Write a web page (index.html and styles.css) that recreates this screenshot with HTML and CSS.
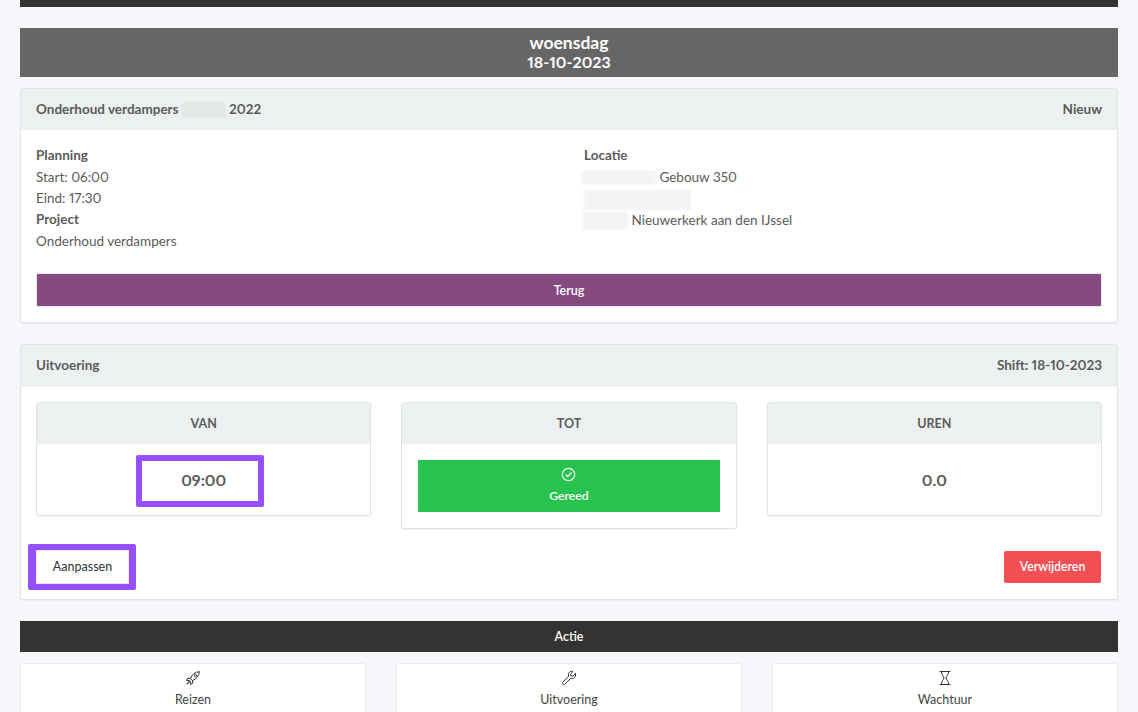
FILE: index.html
```html
<!DOCTYPE html>
<html lang="nl">
<head>
<meta charset="utf-8">
<title>Uitvoering</title>
<link rel="stylesheet" href="styles.css">
</head>
<body>
<div class="page">
  <div class="topbar"></div>
  <div class="dayhead"><div class="day">woensdag</div><div class="date">18-10-2023</div></div>

  <section class="card first">
    <header class="card-head">
      <span>Onderhoud verdampers <span class="blur blur-title"></span> 2022</span>
      <span>Nieuw</span>
    </header>
    <div class="card-body">
      <div class="info">
        <div>
          <div class="label">Planning</div>
          <div class="line">Start: 06:00</div>
          <div class="line">Eind: 17:30</div>
          <div class="label">Project</div>
          <div class="line">Onderhoud verdampers</div>
        </div>
        <div>
          <div class="label">Locatie</div>
          <div class="line"><span class="blur blur-a"></span> Gebouw 350</div>
          <div class="line"><span class="blur blur-b"></span></div>
          <div class="line"><span class="blur blur-c"></span> Nieuwerkerk aan den IJssel</div>
        </div>
      </div>
      <a class="btn-back">Terug</a>
    </div>
  </section>

  <section class="card second">
    <header class="card-head tall">
      <span>Uitvoering</span>
      <span>Shift: 18-10-2023</span>
    </header>
    <div class="card-body">
      <div class="times">
        <div class="box">
          <div class="box-head">VAN</div>
          <div class="box-value">09:00</div>
          <div class="mark mark-van"></div>
        </div>
        <div class="box">
          <div class="box-head">TOT</div>
          <div class="box-inner">
            <a class="btn-done">
              <svg class="icon-check" viewBox="0 0 16 16" fill="none" stroke="#fff" stroke-width="1.3" stroke-linecap="round" stroke-linejoin="round"><circle cx="8" cy="8" r="6.6"/><path d="M5.2 8.3l2 1.9 3.6-4"/></svg>
              <span>Gereed</span>
            </a>
          </div>
        </div>
        <div class="box">
          <div class="box-head">UREN</div>
          <div class="box-value">0.0</div>
        </div>
      </div>
      <div class="actions">
        <div class="mark-wrap"><a class="btn-edit">Aanpassen</a></div>
        <a class="btn-delete">Verwijderen</a>
      </div>
    </div>
  </section>

  <div class="actionbar">Actie</div>
  <div class="tiles">
    <a class="tile">
      <svg class="tile-icon" viewBox="0 0 16 16" fill="none" stroke="#333" stroke-width="1" stroke-linejoin="round" stroke-linecap="round"><path d="M5.6 8.2C7 4.4 10 2 14.4 1.6 14 6 11.6 9 7.8 10.4z"/><circle cx="10.4" cy="5.6" r="1.2"/><path d="M5.6 8.2L2.6 8.4 1.6 10.6 4.6 10.6"/><path d="M7.8 10.4L7.6 13.4 5.4 14.4 5.4 11.4"/><path d="M3.8 11.6L1.8 14.2 4.4 12.2"/></svg>
      <span>Reizen</span>
    </a>
    <a class="tile">
      <svg class="tile-icon" viewBox="0 0 16 16" fill="none" stroke="#333" stroke-width="1" stroke-linejoin="round" stroke-linecap="round"><path d="M14.4 3.8L11.9 6.2 9.9 5.9 9.6 3.9 12 1.5C10.2.9 8.3 1.6 7.6 3.3 7.2 4.3 7.3 5.4 7.7 6.2L1.9 12C1.2 12.7 1.2 13.7 1.8 14.3 2.4 14.9 3.4 14.8 4.1 14.1L9.7 8.3C10.6 8.7 11.7 8.7 12.6 8.3 14.4 7.5 15.1 5.6 14.4 3.8z"/></svg>
      <span>Uitvoering</span>
    </a>
    <a class="tile">
      <svg class="tile-icon" viewBox="0 0 16 16" fill="none" stroke="#333" stroke-width="1" stroke-linejoin="round" stroke-linecap="round"><path d="M3 1.5H13M3 14.5H13"/><path d="M4.3 1.5C4.3 5 7 6.5 7 8S4.3 11 4.3 14.5M11.7 1.5C11.7 5 9 6.5 9 8S11.7 11 11.7 14.5"/></svg>
      <span>Wachtuur</span>
    </a>
  </div>
</div>
</body>
</html>
```
FILE: styles.css
```css
* { box-sizing: border-box; }
html, body { margin: 0; height: 712px; overflow: hidden; }
body {
  background: #f5f7fb;
  color: #5b5b5b;
  font-family: Lato, "Noto Sans", sans-serif;
  font-size: 13.5px;
  font-variant-numeric: proportional-nums;
  line-height: 21px;
}
.page { padding: 0 20px; }
.topbar { height: 7px; background: #333; }
.dayhead {
  margin-top: 21px;
  height: 49px;
  padding-top: 6px;
  background: #666;
  color: #fff;
  font-weight: 700;
  text-align: center;
}
.day { font-size: 17.5px; line-height: 18px; }
.date { font-size: 16px; line-height: 19px; }
.card {
  background: #fff;
  border: 1px solid #e2e4e6;
  border-radius: 3px;
  box-shadow: 0 1px 1px rgba(0,0,0,.05);
}
.first { margin-top: 11px; height: 235px; }
.second { margin-top: 21px; height: 256px; }
.card-head {
  display: flex;
  justify-content: space-between;
  align-items: center;
  height: 41px;
  padding: 0 15px 1px;
  background: #ecf0f1;
  font-weight: 700;
}
.tall { height: 42px; padding-bottom: 1px; }
.card-body { padding: 15px; }
.info {
  display: grid;
  grid-template-columns: 1fr 1fr;
  column-gap: 30px;
  height: 128px;
}
.line { height: 21px; margin-top: 0.25px; }
.label { font-weight: 700; }
.label + .line { margin-top: 1px; }
.blur { display: inline-block; vertical-align: middle; filter: blur(1px); }
.blur-title { width: 44px; height: 16px; margin: -2px 0; background: #e3e6e7; }
.blur-a { width: 74px; height: 14px; margin: -2px 0 0 -2px; background: #f3f3f3; }
.blur-b { width: 107px; height: 20px; background: #f4f4f4; }
.blur-c { width: 45px; height: 17px; margin: -2px 0 0 -1px; background: #f3f3f3; }
.btn-back {
  display: block;
  height: 34px;
  border: 1px solid #e8e8e8;
  border-radius: 2px;
  background: #854b80;
  color: #fff;
  font-weight: 600;
  font-size: 12.5px;
  line-height: 33px;
  text-align: center;
}
.times {
  display: grid;
  grid-template-columns: repeat(3, 1fr);
  column-gap: 30px;
  align-items: start;
}
.box {
  position: relative;
  background: #fff;
  border: 1px solid #e0e2e4;
  border-radius: 3px;
  box-shadow: 0 1px 1px rgba(0,0,0,.05);
}
.box-head {
  height: 41px;
  background: #ecf0f1;
  font-size: 12.5px;
  font-weight: 700;
  line-height: 41px;
  text-align: center;
}
.box-value {
  height: 71px;
  font-size: 16px;
  font-weight: 700;
  line-height: 72px;
  text-align: center;
}
.mark {
  position: absolute;
  border: 6px solid #9650ff;
  border-radius: 2px;
}
.mark-van { left: 99px; top: 52px; width: 128px; height: 52px; }
.box-inner { padding: 16px; }
.btn-done {
  display: flex;
  flex-direction: column;
  align-items: center;
  height: 52px;
  padding-top: 7px;
  background: #28c34f;
  color: #fff;
  border-radius: 1px;
  font-weight: 600;
  font-size: 12.2px;
}
.icon-check { width: 15px; height: 15px; margin-bottom: 3px; }
.actions {
  display: flex;
  justify-content: space-between;
  align-items: center;
  margin-top: 15px;
  padding-right: 1px;
}
.mark-wrap {
  margin-left: -8px;
  padding: 6px 7px 6px 8px;
  background: #9650ff;
  border-radius: 2px;
}
.btn-edit {
  display: block;
  width: 93px;
  height: 34px;
  background: #fff;
  border: 1px solid #e8e8e8;
  color: #333;
  font-size: 12.5px;
  line-height: 31px;
  text-align: center;
}
.btn-delete {
  width: 97px;
  height: 32px;
  background: #f44f54;
  border-radius: 2px;
  color: #fff;
  font-weight: 600;
  font-size: 12.3px;
  line-height: 31px;
  text-align: center;
}
.actionbar {
  margin-top: 21px;
  height: 31px;
  background: #333;
  color: #fff;
  font-weight: 600;
  font-size: 12.5px;
  line-height: 31px;
  text-align: center;
}
.tiles {
  display: grid;
  grid-template-columns: repeat(3, 1fr);
  column-gap: 30px;
  margin-top: 11px;
}
.tile {
  display: flex;
  flex-direction: column;
  align-items: center;
  height: 70px;
  padding-top: 6px;
  background: #fff;
  border: 1px solid #e8eaee;
  border-radius: 3px;
  color: #444;
  font-size: 12.5px;
}
.tile-icon { width: 16px; height: 16px; margin-bottom: 3px; }
```
